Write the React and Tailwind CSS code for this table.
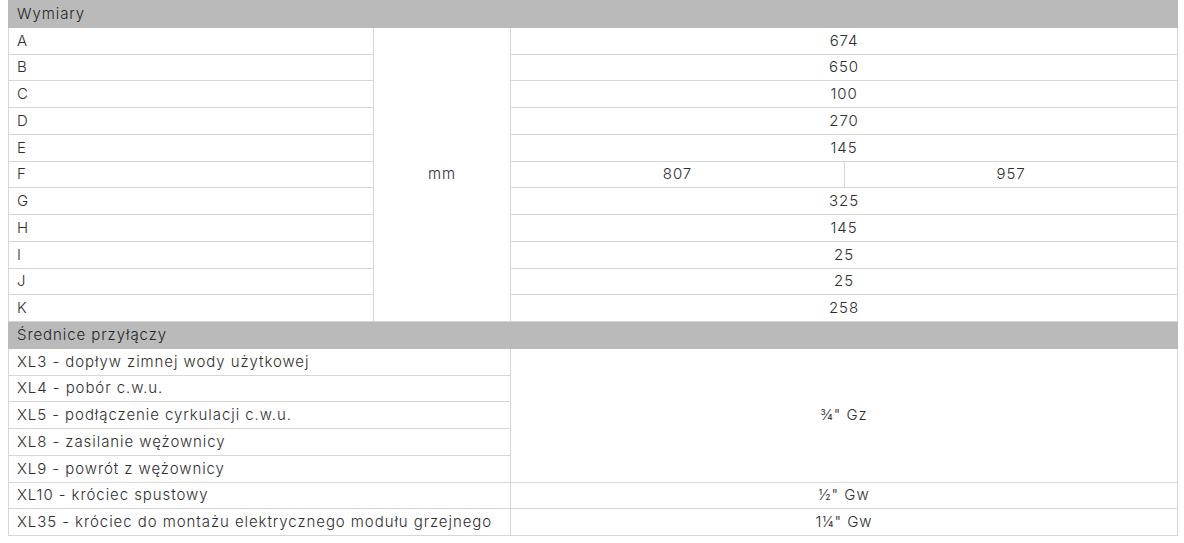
export default function App() {
  const letters = [
    ["A", "674"],
    ["B", "650"],
    ["C", "100"],
    ["D", "270"],
    ["E", "145"],
    ["F", null],
    ["G", "325"],
    ["H", "145"],
    ["I", "25"],
    ["J", "25"],
    ["K", "258"],
  ];

  const connections = [
    "XL3 - dopływ zimnej wody użytkowej",
    "XL4 - pobór c.w.u.",
    "XL5 - podłączenie cyrkulacji c.w.u.",
    "XL8 - zasilanie wężownicy",
    "XL9 - powrót z wężownicy",
  ];

  const cell = "border border-[#d6d6d6] px-2 pt-0 pb-px font-light";
  const row = "h-[26.75px]";

  return (
    <div className="bg-white min-h-[543px] pl-2 pr-[7px] text-[15px] leading-none tracking-[0.062em] text-[#2e2e2e] font-['Inter','Liberation_Sans',sans-serif]">
      <table className="w-[1169px] border-collapse table-fixed">
        <colgroup>
          <col className="w-[365px]" />
          <col className="w-[137px]" />
          <col className="w-[334px]" />
          <col className="w-[333px]" />
        </colgroup>
        <tbody>
          <tr className={row}>
            <th colSpan={4} className="bg-[#bababa] px-2 pb-px text-left font-light text-[#262626] border border-[#bababa]">
              Wymiary
            </th>
          </tr>
          {letters.map(([label, value], i) => (
            <tr key={label} className={row}>
              <td className={cell}>{label}</td>
              {i === 0 && (
                <td rowSpan={11} className={cell + " text-center"}>
                  mm
                </td>
              )}
              {value ? (
                <td colSpan={2} className={cell + " text-center"}>
                  {value}
                </td>
              ) : (
                <>
                  <td className={cell + " text-center"}>807</td>
                  <td className={cell + " text-center"}>957</td>
                </>
              )}
            </tr>
          ))}
          <tr className={row}>
            <th colSpan={4} className="bg-[#bababa] px-2 pb-px text-left font-light text-[#262626] border border-[#bababa]">
              Średnice przyłączy
            </th>
          </tr>
          {connections.map((name, i) => (
            <tr key={name} className={row}>
              <td colSpan={2} className={cell}>
                {name}
              </td>
              {i === 0 && (
                <td colSpan={2} rowSpan={5} className={cell + " text-center"}>
                  ¾" Gz
                </td>
              )}
            </tr>
          ))}
          <tr className={row}>
            <td colSpan={2} className={cell}>
              XL10 - króciec spustowy
            </td>
            <td colSpan={2} className={cell + " text-center"}>
              ½" Gw
            </td>
          </tr>
          <tr className={row}>
            <td colSpan={2} className={cell}>
              XL35 - króciec do montażu elektrycznego modułu grzejnego
            </td>
            <td colSpan={2} className={cell + " text-center"}>
              1¼" Gw
            </td>
          </tr>
        </tbody>
      </table>
    </div>
  );
}
